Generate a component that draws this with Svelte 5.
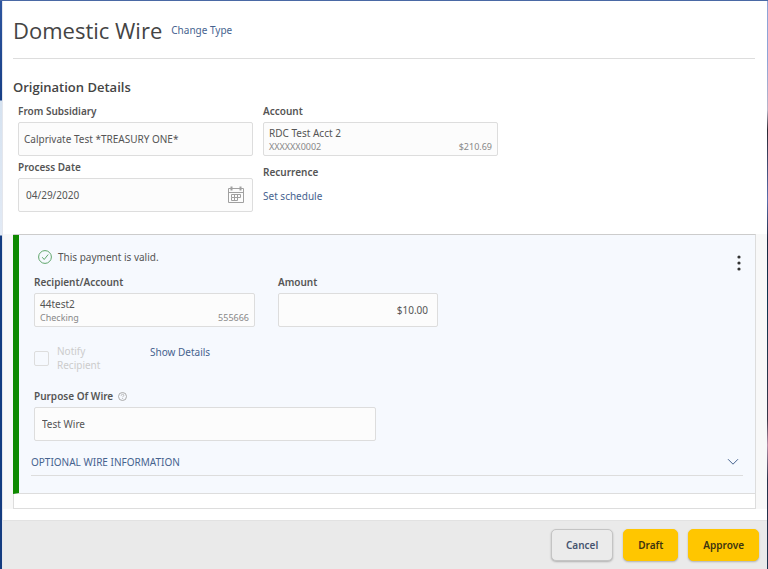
<script>
  let subsidiary = $state('Calprivate Test *TREASURY ONE*')
  let processDate = $state('04/29/2020')
  let amount = $state('$10.00')
  let purpose = $state('Test Wire')
  let notify = $state(false)

  const account = { name: 'RDC Test Acct 2', number: 'XXXXXX0002', balance: '$210.69' }
  const recipient = { name: '44test2', type: 'Checking', number: '555666' }
</script>

{#snippet picker(id, title, detail, value)}
  <button type="button" class="field picker" {id} aria-labelledby="{id}-label {id}">
    <span class="picker-title">{title}</span>
    <span class="picker-detail">
      <span>{detail}</span>
      <span>{value}</span>
    </span>
  </button>
{/snippet}

<div class="page">
  <main>
    <header>
      <h1>Domestic Wire</h1>
      <a href="#change-type">Change Type</a>
    </header>

    <section class="origination">
      <h2>Origination Details</h2>
      <div class="columns">
        <div class="column">
          <label for="subsidiary">From Subsidiary</label>
          <input id="subsidiary" class="field subsidiary" type="text" bind:value={subsidiary} />
          <label for="process-date">Process Date</label>
          <div class="field date">
            <input id="process-date" type="text" bind:value={processDate} />
            <button type="button" class="icon-button" aria-label="Open calendar">
              <svg width="18" height="18" viewBox="0 0 18 18" fill="none" stroke="#a0a0a0">
                <path d="M1.5 2.5h15v14h-15zM1.5 6.5h15" />
                <path d="M4.5 0.5v4M13.5 0.5v4" stroke-width="2" />
                <path d="M4.5 8.5h9v3h-9zM4.5 11.5v3h6v-6M7.5 8.5v6" />
              </svg>
            </button>
          </div>
        </div>
        <div class="column">
          <label for="account" id="account-label">Account</label>
          {@render picker('account', account.name, account.number, account.balance)}
          <div class="recurrence">
            <h3>Recurrence</h3>
            <a href="#schedule">Set schedule</a>
          </div>
        </div>
      </div>
    </section>

    <section class="payments">
      <div class="card">
        <div class="payment">
          <div class="status">
            <svg width="14" height="14" viewBox="0 0 14 14" fill="none" stroke="#5fa56b">
              <circle cx="7" cy="7" r="6.4" />
              <path d="M4.2 7.2l2 2.3 4-5" />
            </svg>
            <span>This payment is valid.</span>
            <button type="button" class="icon-button more" aria-label="More actions">
              <svg width="4" height="16" viewBox="0 0 4 16" fill="#333">
                <circle cx="2" cy="2" r="1.6" />
                <circle cx="2" cy="8" r="1.6" />
                <circle cx="2" cy="14" r="1.6" />
              </svg>
            </button>
          </div>

          <div class="row">
            <div class="recipient">
              <label for="recipient" id="recipient-label">Recipient/Account</label>
              {@render picker('recipient', recipient.name, recipient.type, recipient.number)}
            </div>
            <div class="amount">
              <label for="amount">Amount</label>
              <input id="amount" class="field" type="text" bind:value={amount} />
            </div>
          </div>

          <div class="options">
            <label class="notify">
              <input type="checkbox" bind:checked={notify} disabled />
              <span>Notify Recipient</span>
            </label>
            <a href="#details">Show Details</a>
          </div>

          <div class="purpose">
            <div class="purpose-label">
              <label for="purpose">Purpose Of Wire</label>
              <svg width="9" height="9" viewBox="0 0 9 9" fill="none" stroke="#aaa">
                <circle cx="4.5" cy="4.5" r="4" />
                <path d="M3.2 3.7c0-2 2.7-1.8 2.6-.3 0 .8-1.2.9-1.2 1.8M4.6 6.1v1" stroke-width="0.8" />
              </svg>
            </div>
            <input id="purpose" class="field" type="text" bind:value={purpose} />
          </div>

          <button type="button" class="optional" aria-expanded="false">
            <span>OPTIONAL WIRE INFORMATION</span>
            <svg width="12" height="8" viewBox="0 0 12 8" fill="none" stroke="#46638f">
              <path d="M1 1.2l5 5 5-5" />
            </svg>
          </button>
        </div>
      </div>
    </section>

    <footer>
      <button type="button" class="btn">Cancel</button>
      <button type="button" class="btn primary">Draft</button>
      <button type="button" class="btn primary">Approve</button>
    </footer>
  </main>
</div>

<style>
  :global(body) {
    margin: 0;
  }
  .page {
    box-sizing: border-box;
    min-height: 100vh;
    padding: 1px 1px 0 2px;
    font-family: 'Noto Sans', 'Open Sans', sans-serif;
    font-size: 10px;
    line-height: 16px;
    color: #555;
    background:
      linear-gradient(#4a69a5, #4a69a5) top / 100% 1px no-repeat,
      linear-gradient(#8fa4d6 0 60px, #b9b4c8 110px, #2b2733 130px, #5a6fae 200px, #1c2740 240px, #0d3350 300px, #3a3648 420px, #b48fa8 445px, #27304a 480px, #1d3350)
        right / 1px 100% no-repeat,
      linear-gradient(#2e56a0, #173f86 100px, #d5e2f0 101px, #e2eaf5 235px, #143c80 236px);
  }
  main {
    background: #fff;
    border-left: 1px solid #e4e6ec;
    border-bottom: 2px solid #f7f7f7;
  }
  header {
    display: flex;
    align-items: center;
    gap: 9px;
    height: 57px;
    margin: 0 12px 0 10px;
    border-bottom: 1px solid #ddd;
  }
  h1,
  h2 {
    margin: 0;
    font-family: 'Open Sans', 'Noto Sans', sans-serif;
    color: #444;
  }
  h1 {
    font-size: 22px;
    line-height: 30px;
    font-weight: 400;
  }
  h2 {
    font-size: 13px;
    line-height: 18px;
    font-weight: 600;
  }
  a {
    color: #46638f;
    text-decoration: none;
  }
  h3,
  label {
    display: block;
    margin: 0;
    font-size: 10px;
    line-height: 16px;
    font-weight: 600;
    color: #555;
  }
  button,
  input {
    font: inherit;
    color: inherit;
  }
  .origination {
    padding: 19px 12px 19px 10px;
  }
  .columns {
    display: flex;
    gap: 10px;
    padding: 7px 5px 0;
  }
  .column {
    width: 235px;
  }
  .field {
    box-sizing: border-box;
    display: block;
    width: 100%;
    height: 34px;
    margin: 3px 0;
    padding: 0 7px;
    background: #fcfcfc;
    border: 1px solid #ddd;
    border-radius: 2px;
  }
  .subsidiary {
    padding: 0 5px;
  }
  .date {
    display: flex;
    align-items: center;
  }
  .date input {
    flex: 1;
    min-width: 0;
    padding: 0;
    border: 0;
    background: none;
  }
  .icon-button {
    display: flex;
    padding: 0;
    border: 0;
    background: none;
  }
  .picker {
    padding: 3px 5px 2px;
    text-align: left;
  }
  .picker-title {
    display: block;
    line-height: 15px;
  }
  .picker-detail {
    display: flex;
    justify-content: space-between;
    font-size: 9px;
    line-height: 12px;
    color: #888;
  }
  .recurrence {
    display: grid;
    gap: 8px;
    margin-top: 8px;
  }
  .payments {
    padding: 0 11px 0 10px;
    background: #f8f8f8;
    border-bottom: 11px solid #fff;
  }
  .card {
    padding-bottom: 14px;
    background: #fff;
    border: 1px solid #ddd;
    border-top-color: #ccc;
  }
  .payment {
    margin-left: -1px;
    padding: 14px 12px 17px;
    background: #f6f9fe;
    border-left: 6px solid #0f8a00;
    border-bottom: 1px solid #ddd;
  }
  .status {
    display: flex;
    align-items: center;
    gap: 6px;
    padding-left: 7px;
  }
  .more {
    margin-left: auto;
    padding: 6px 2px 0;
    height: 16px;
  }
  .row {
    display: flex;
    gap: 23px;
    padding: 9px 3px 0;
  }
  .recipient {
    width: 221px;
  }
  .amount {
    width: 160px;
  }
  .amount .field {
    padding: 0 9px;
    text-align: right;
  }
  .options {
    display: flex;
    align-items: flex-start;
    gap: 34px;
    padding: 14px 3px 0;
  }
  .notify {
    display: flex;
    align-items: center;
    gap: 8px;
    width: 82px;
    line-height: 14px;
    font-weight: 400;
    color: #ccc;
  }
  .notify input {
    appearance: none;
    box-sizing: border-box;
    flex: none;
    width: 15px;
    height: 15px;
    margin: 0;
    border: 1px solid #ddd;
    border-radius: 2px;
  }
  .purpose {
    width: 342px;
    padding: 16px 3px 0;
  }
  .purpose-label {
    display: flex;
    align-items: center;
    gap: 5px;
  }
  .optional {
    display: flex;
    align-items: center;
    justify-content: space-between;
    width: 100%;
    height: 32px;
    padding: 4px 4px 0 0;
    border: 0;
    border-bottom: 1px solid #ddd;
    background: none;
    color: #46638f;
  }
  footer {
    display: flex;
    justify-content: flex-end;
    gap: 10px;
    padding: 8px;
    background: #eaeaea;
    border-top: 1px solid #e2e2e2;
  }
  .btn {
    height: 32px;
    padding: 0 14px;
    border: 1px solid #c4c4c4;
    border-radius: 5px;
    background: #ebebeb;
    color: #46546f;
    font-weight: 600;
    box-shadow: 0 1px 2px rgba(0, 0, 0, 0.25);
  }
  .primary {
    border-color: #ffc600;
    background: #ffc600;
    color: #3d3410;
  }
</style>
